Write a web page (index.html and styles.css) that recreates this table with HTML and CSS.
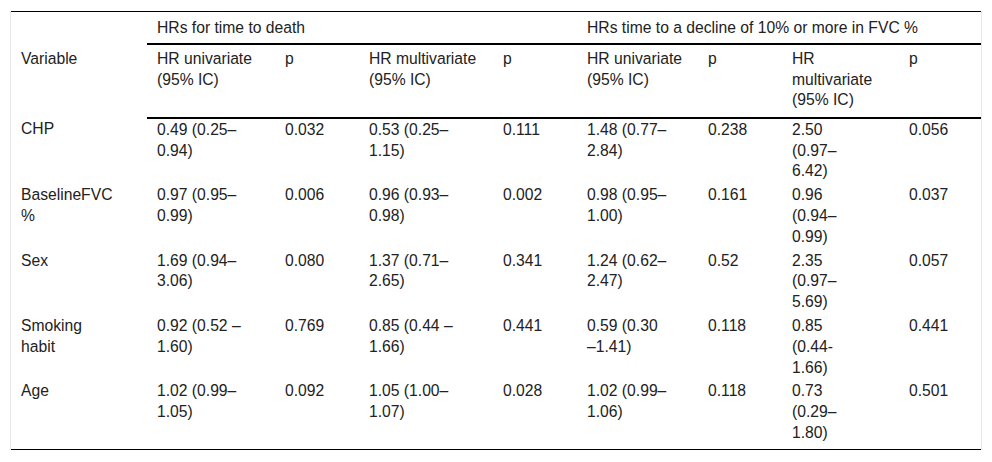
FILE: index.html
```html
<!DOCTYPE html>
<html lang="en">
<head>
<meta charset="utf-8">
<title>Hazard ratios</title>
<link rel="stylesheet" href="styles.css">
</head>
<body>
<div class="wrap">
<table class="hr-table">
<colgroup>
<col class="c1"><col class="c2"><col class="c3"><col class="c4"><col class="c5"><col class="c6"><col class="c7"><col class="c8"><col class="c9">
</colgroup>
<thead>
<tr class="group-row">
<th class="var" rowspan="2">Variable</th>
<th class="group" colspan="4">HRs for time to death</th>
<th class="group" colspan="4">HRs time to a decline of 10% or more in FVC %</th>
</tr>
<tr class="sub-row">
<th>HR univariate (95% IC)</th>
<th>p</th>
<th>HR multivariate (95% IC)</th>
<th>p</th>
<th>HR univariate (95% IC)</th>
<th>p</th>
<th>HR multivariate (95% IC)</th>
<th>p</th>
</tr>
</thead>
<tbody>
<tr>
<td>CHP</td><td>0.49 (0.25–0.94)</td><td>0.032</td><td>0.53 (0.25–1.15)</td><td>0.111</td><td>1.48 (0.77–2.84)</td><td>0.238</td><td>2.50 (0.97–6.42)</td><td>0.056</td>
</tr>
<tr>
<td>BaselineFVC %</td><td>0.97 (0.95–0.99)</td><td>0.006</td><td>0.96 (0.93–0.98)</td><td>0.002</td><td>0.98 (0.95–1.00)</td><td>0.161</td><td>0.96 (0.94–0.99)</td><td>0.037</td>
</tr>
<tr>
<td>Sex</td><td>1.69 (0.94–3.06)</td><td>0.080</td><td>1.37 (0.71–2.65)</td><td>0.341</td><td>1.24 (0.62–2.47)</td><td>0.52</td><td>2.35 (0.97–5.69)</td><td>0.057</td>
</tr>
<tr>
<td>Smoking habit</td><td>0.92 (0.52 –1.60)</td><td>0.769</td><td>0.85 (0.44 –1.66)</td><td>0.441</td><td>0.59 (0.30 –&#8288;1.41)</td><td>0.118</td><td>0.85 (0.44-1.66)</td><td>0.441</td>
</tr>
<tr class="last">
<td>Age</td><td>1.02 (0.99–1.05)</td><td>0.092</td><td>1.05 (1.00–1.07)</td><td>0.028</td><td>1.02 (0.99–1.06)</td><td>0.118</td><td>0.73 (0.29–1.80)</td><td>0.501</td>
</tr>
</tbody>
</table>
</div>
</body>
</html>
```
FILE: styles.css
```css
html, body {
  margin: 0;
  padding: 0;
  background: #ffffff;
}
body {
  padding: 11px 10px;
  font-family: "Liberation Sans", Arial, sans-serif;
  font-size: 15.68px;
  line-height: 20.8px;
  color: #222222;
}
.wrap {
  width: 970px;
  border-left: 1px solid #e8e8e8;
  border-right: 1px solid #e8e8e8;
}
.hr-table {
  width: 970px;
  table-layout: fixed;
  border-collapse: collapse;
  border-top: 1px solid #000;
  border-bottom: 1px solid #000;
}
.c1 { width: 136px; }
.c2 { width: 128px; }
.c3 { width: 84px; }
.c4 { width: 134px; }
.c5 { width: 84px; }
.c6 { width: 121px; }
.c7 { width: 84px; }
.c8 { width: 117px; }
.c9 { width: 82px; }
th, td {
  text-align: left;
  vertical-align: top;
  font-weight: normal;
  padding: 2px 10px;
}
.group-row th {
  padding: 5.5px 10px 4.5px;
}
.group-row .group {
  border-bottom: 2px solid #000;
}
.hr-table .var {
  vertical-align: middle;
  padding: 0 10px 11px;
}
.sub-row th {
  padding: 4px 10px 5.6px;
  border-bottom: 2px solid #000;
}
tbody td {
  padding: 1px 10px 2px;
}
tbody .last td {
  padding-bottom: 5.6px;
}
/* column content widths (to match wrapping) */
tbody td:nth-child(1) { padding-right: 31px; }
tbody td:nth-child(2),
.sub-row th:nth-child(1) { padding-right: 18px; }
tbody td:nth-child(4),
.sub-row th:nth-child(3) { padding-right: 14px; }
tbody td:nth-child(6),
.sub-row th:nth-child(5) { padding-right: 11px; }
tbody td:nth-child(8),
.sub-row th:nth-child(7) { padding-right: 37px; }
```
